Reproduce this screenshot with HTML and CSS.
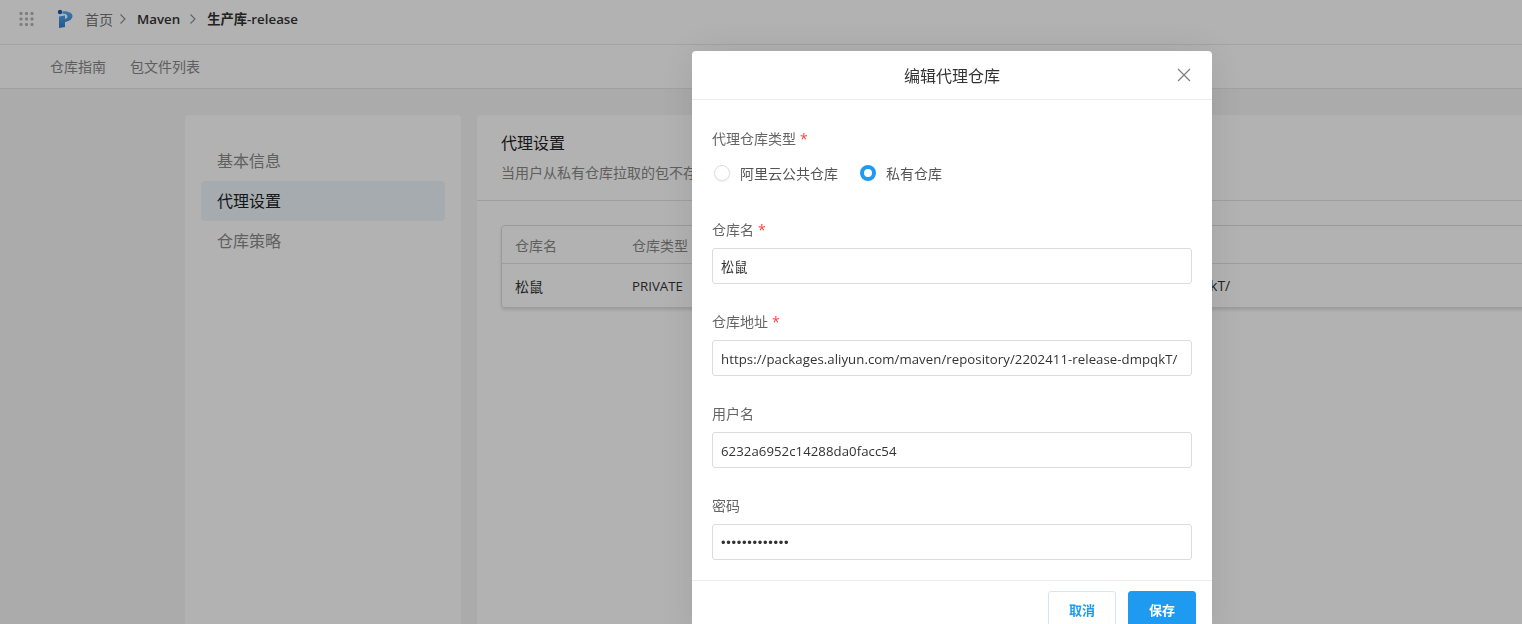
FILE: index.html
```html
<!DOCTYPE html>
<html lang="zh">
<head>
<meta charset="utf-8">
<title>编辑代理仓库</title>
<link rel="stylesheet" href="styles.css">
</head>
<body>
<div class="page">
  <header class="topbar">
    <svg class="grid-icon" width="16" height="14" viewBox="0 0 16 14"><g fill="#b4b4b4"><rect x="0.5" y="0" width="3" height="3" rx="1"/><rect x="6" y="0" width="3" height="3" rx="1"/><rect x="11.5" y="0" width="3" height="3" rx="1"/><rect x="0.5" y="5.5" width="3" height="3" rx="1"/><rect x="6" y="5.5" width="3" height="3" rx="1"/><rect x="11.5" y="5.5" width="3" height="3" rx="1"/><rect x="0.5" y="11" width="3" height="3" rx="1"/><rect x="6" y="11" width="3" height="3" rx="1"/><rect x="11.5" y="11" width="3" height="3" rx="1"/></g></svg>
    <svg class="logo" width="17" height="20" viewBox="0 0 17 20"><defs><linearGradient id="lg" x1="0" y1="0" x2="0" y2="1"><stop offset="0" stop-color="#58aef8"/><stop offset="1" stop-color="#2b7fd0"/></linearGradient></defs><path d="M5.500 2.200C11 2 15.500 3.500 15.500 7 15.500 10.500 11.500 12.500 8 13V18L2 19V7.500L8 6.500V10C9.800 9.500 10.500 8.500 10.500 7.500 10.500 5.500 8 4.800 5.500 4.800z" fill="url(#lg)"/><circle cx="3" cy="3" r="2.200" fill="#0f5db5"/></svg>
    <nav class="crumbs">
      <span class="crumb-home">首页</span>
      <svg class="chev" width="8" height="12" viewBox="0 0 8 12"><path d="M1.500 1.500 6 6l-4.500 4.500" fill="none" stroke="#8c8c8c" stroke-width="1.100"/></svg>
      <span class="crumb-strong">Maven</span>
      <svg class="chev chev-wide" width="8" height="12" viewBox="0 0 8 12"><path d="M1.500 1.500 6 6l-4.500 4.500" fill="none" stroke="#8c8c8c" stroke-width="1.100"/></svg>
      <span class="crumb-strong">生产库-release</span>
    </nav>
  </header>
  <div class="subnav">
    <span>仓库指南</span>
    <span>包文件列表</span>
  </div>
  <main class="content">
    <aside class="side card">
      <div class="side-item">基本信息</div>
      <div class="side-item active">代理设置</div>
      <div class="side-item">仓库策略</div>
    </aside>
    <section class="panel card">
      <div class="panel-head">
        <h2>代理设置</h2>
        <p>当用户从私有仓库拉取的包不存在</p>
      </div>
      <div class="table">
        <div class="row head">
          <span class="c1">仓库名</span><span class="c2">仓库类型</span>
        </div>
        <div class="row body">
          <span class="c1">松鼠</span><span class="c2 latin">PRIVATE</span><span class="c3">https://packages.aliyun.com/maven/repository/2202411-release-dmpqkT/</span>
        </div>
      </div>
    </section>
  </main>
</div>
<div class="mask"></div>
<div class="modal">
  <div class="modal-head">
    <span class="modal-title">编辑代理仓库</span>
    <svg class="close" width="14" height="14" viewBox="0 0 14 14"><path d="M1 1l12 12M13 1 1 13" stroke="#7d7d7d" stroke-width="1.200" fill="none"/></svg>
  </div>
  <div class="modal-body">
    <div class="field radios-field">
      <label class="lbl">代理仓库类型<i>*</i></label>
      <div class="radios">
        <span class="radio"><b class="dot"></b>阿里云公共仓库</span>
        <span class="radio"><b class="dot on"></b>私有仓库</span>
      </div>
    </div>
    <div class="field">
      <label class="lbl">仓库名<i>*</i></label>
      <div class="input">松鼠</div>
    </div>
    <div class="field">
      <label class="lbl">仓库地址<i>*</i></label>
      <div class="input">https://packages.aliyun.com/maven/repository/2202411-release-dmpqkT/</div>
    </div>
    <div class="field">
      <label class="lbl">用户名</label>
      <div class="input">6232a6952c14288da0facc54</div>
    </div>
    <div class="field">
      <label class="lbl">密码</label>
      <div class="input pwd">•••••••••••••</div>
    </div>
  </div>
  <div class="modal-foot">
    <button class="btn ghost">取消</button>
    <button class="btn primary">保存</button>
  </div>
</div>
</body>
</html>
```
FILE: styles.css
```css
* { box-sizing: border-box; }
html, body { margin: 0; height: 100%; overflow: hidden; }
body {
  font-family: "Open Sans", "Noto Sans CJK SC", sans-serif;
  font-size: 14px;
  color: #333;
  background: #f5f5f5;
}
.page { height: 624px; overflow: hidden; }
.topbar {
  height: 45px;
  background: #fff;
  border-bottom: 1px solid #eaeaea;
  display: flex;
  align-items: center;
  padding: 0 0 7px 19px;
}
.grid-icon { margin-right: 22px; }
.logo { margin-right: 11px; }
.crumbs { display: flex; align-items: center; }
.crumb-home { color: #777; font-size: 14px; }
.crumb-strong { color: #333; font-size: 13.3px; font-weight: 600; }
.chev { margin: 0 10px 0 6px; }
.chev-wide { margin: 0 10px 0 9px; }
.subnav {
  height: 44px;
  background: #fff;
  border-bottom: 1px solid #e6e6e6;
  display: flex;
  align-items: center;
  gap: 24px;
  padding: 0 0 1px 50px;
  color: #888;
  font-size: 14px;
}
.content {
  display: flex;
  gap: 16px;
  padding: 26px 0 0 185px;
  width: 1800px;
}
.card { background: #fff; border-radius: 4px; height: 560px; }
.side { width: 276px; padding: 26px 16px; }
.side-item {
  height: 40px;
  line-height: 40px;
  padding-left: 16px;
  font-size: 16px;
  color: #8a8a8a;
  border-radius: 4px;
}
.side-item.active { color: #222; background: #edf5fa; }
.panel { flex: 1; }
.panel-head { height: 86px; padding: 15px 24px 0; border-bottom: 1px solid #e4e4e4; }
.panel-head h2 { margin: 0; font-size: 16px; font-weight: 400; line-height: 26px; color: #222; }
.panel-head p { margin: 7px 0 0; font-size: 14px; line-height: 20px; color: #888; }
.table {
  margin: 24px 24px 0;
  border: 1px solid #dedede;
  border-radius: 4px;
  box-shadow: 0 2px 3px rgba(0,0,0,.12);
  height: 83px;
}
.row { display: flex; align-items: center; padding-left: 13px; }
.row.head { height: 38px; border-bottom: 1px solid #e2e2e2; color: #888; }
.row.body { height: 43px; color: #333; }
.c1 { width: 117px; }
.c2 { width: 118px; }
.latin { font-size: 13.3px; }
.c3 { font-size: 14px; }
.mask { position: fixed; inset: 0; background: rgba(0,0,0,.3); }
.modal {
  position: fixed;
  left: 692px;
  top: 51px;
  width: 520px;
  background: #fff;
  border-radius: 4px;
  box-shadow: 0 0 40px rgba(0,0,0,.1);
}
.modal-head {
  height: 49px;
  border-bottom: 1px solid #ececec;
  display: flex;
  align-items: center;
  justify-content: center;
  position: relative;
}
.modal-title { font-size: 16px; color: #333; }
.close { position: absolute; right: 21px; top: 17px; }
.modal-body { padding: 31px 20px 0; height: 480px; }
.field { margin-bottom: 20px; height: 72px; }
.radios-field { height: 80px; margin-bottom: 11px; }
.lbl { display: block; height: 16px; line-height: 16px; margin-bottom: 10px; font-size: 14px; color: #666; }
.lbl i { color: #f5443c; font-style: normal; margin-left: 4px; }
.radios { display: flex; gap: 22px; margin-top: 16px; padding-left: 2px; color: #555; }
.radio { display: flex; align-items: center; height: 20px; }
.dot {
  width: 16px; height: 16px;
  border: 1px solid #ddd;
  border-radius: 50%;
  margin-right: 10px;
  box-shadow: 0 1px 2px rgba(0,0,0,.08);
}
.dot.on { border: 4.500px solid #1e9bf0; background: #fff; box-shadow: none; }
.input {
  height: 36px;
  line-height: 36px;
  border: 1px solid #dcdcdc;
  border-radius: 3px;
  padding: 0 8px;
  font-size: 13.2px;
  letter-spacing: .06px;
  color: #333;
  white-space: nowrap;
  overflow: hidden;
}
.pwd { letter-spacing: .7px; font-family: "Liberation Sans", sans-serif; font-size: 13px; }
.modal-foot {
  height: 60px;
  border-top: 1px solid #ececec;
  padding: 10px 16px 0 0;
  display: flex;
  justify-content: flex-end;
  gap: 12px;
}
.btn {
  width: 68px;
  height: 36px;
  border-radius: 3px;
  font: 600 13px "Open Sans", "Noto Sans CJK SC", sans-serif;
  padding: 0;
}
.ghost { background: #fff; border: 1px solid #cfe9fb; color: #1e9bf0; }
.primary { background: #1e9bf0; border: 1px solid #1e9bf0; color: #fff; }
```
